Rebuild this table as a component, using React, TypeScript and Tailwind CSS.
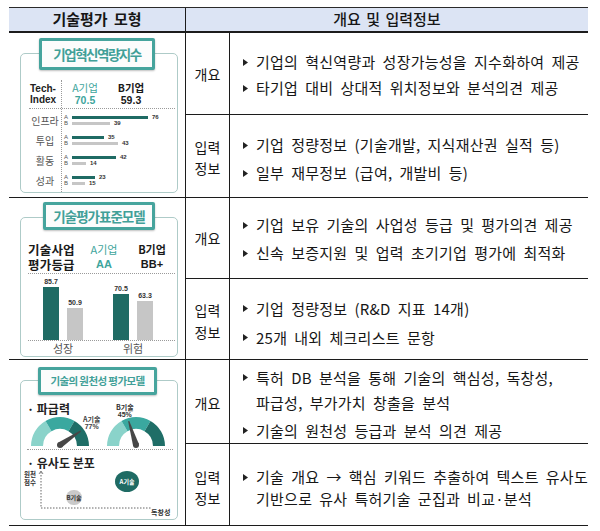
import React from "react";

function Tri() {
  return (
    <svg width="5" height="7" viewBox="0 0 5 7">
      <path d="M0 0L5 3.5L0 7Z" fill="#222" />
    </svg>
  );
}

function Item({
  children,
  lead,
  bh,
  extra = "",
}: {
  children: React.ReactNode;
  lead: string;
  bh: string;
  extra?: string;
}) {
  return (
    <div className={`flex ${extra}`}>
      <div className={`w-[13px] flex-none flex items-center ${bh}`}>
        <Tri />
      </div>
      <div className={`whitespace-nowrap ${lead}`}>{children}</div>
    </div>
  );
}

const rad = (a: number) => (a * Math.PI) / 180;

function arcPath(cx: number, cy: number, r1: number, r2: number, a1: number, a2: number) {
  const p = (r: number, a: number) =>
    `${(cx + r * Math.cos(rad(a))).toFixed(2)} ${(cy - r * Math.sin(rad(a))).toFixed(2)}`;
  return `M${p(r2, a1)} A${r2} ${r2} 0 0 1 ${p(r2, a2)} L${p(r1, a2)} A${r1} ${r1} 0 0 0 ${p(r1, a1)} Z`;
}

function needlePath(cx: number, cy: number, a: number, len: number, w: number) {
  const t = rad(a);
  const tx = cx + len * Math.cos(t);
  const ty = cy - len * Math.sin(t);
  const sx = Math.sin(t);
  const sy = Math.cos(t);
  const f = (n: number) => n.toFixed(2);
  return `M${f(cx + w * sx)} ${f(cy + w * sy)} L${f(tx + 0.6 * sx)} ${f(ty + 0.6 * sy)} L${f(tx - 0.6 * sx)} ${f(ty - 0.6 * sy)} L${f(cx - w * sx)} ${f(cy - w * sy)} Z`;
}

function Gauge({ cx, cy, angle }: { cx: number; cy: number; angle: number }) {
  return (
    <g>
      <path d={arcPath(cx, cy, 17, 29, 180, 120)} fill="#8ad3ca" />
      <path d={arcPath(cx, cy, 17, 29, 120, 60)} fill="#3aa89f" />
      <path d={arcPath(cx, cy, 17, 29, 60, 0)} fill="#1f6e67" />
      <path d={needlePath(cx, cy - 1, angle, 25, 3)} fill="#474747" />
      <circle cx={cx} cy={cy - 1} r={3} fill="#474747" />
    </g>
  );
}

function Title({ children, extra }: { children: React.ReactNode; extra: string }) {
  return (
    <div
      className={`relative z-10 border-[3px] border-[#46a49d] bg-[#fcfcfc] rounded-[2px] flex items-center justify-center font-bold text-[#41a098] shadow-[0_1px_2px_rgba(0,0,0,0.25)] ${extra}`}
    >
      {children}
    </div>
  );
}

function HBar({ letter, w, val, color }: { letter: string; w: string; val: string; color: string }) {
  return (
    <div className="flex items-center h-[6px]">
      <span className="w-[8px] text-[6px] leading-[6px] text-[#555] font-['Liberation_Sans',sans-serif]">{letter}</span>
      <span className={`h-[3px] ${w} ${color}`} />
      <span className="ml-[4px] text-[6px] leading-[6px] font-bold text-[#333] font-['Liberation_Sans',sans-serif]">{val}</span>
    </div>
  );
}

function Card1() {
  const rows = [
    { l: "인프라", a: 76, b: 39, wa: "w-[76px]", wb: "w-[38px]" },
    { l: "투입", a: 35, b: 43, wa: "w-[32px]", wb: "w-[46px]" },
    { l: "활동", a: 42, b: 14, wa: "w-[44px]", wb: "w-[14px]" },
    { l: "성과", a: 23, b: 15, wa: "w-[23px]", wb: "w-[13px]" },
  ];
  return (
    <div className="row-span-2 border-r border-[#1c1c1c] pt-[5px] pl-[11px] flex flex-col">
      <Title extra="ml-[19px] w-[116px] h-[32px] text-[13.5px] tracking-[-1.5px]">기업혁신역량지수</Title>
      <div className="-mt-[17px] w-[158px] h-[140px] border border-[#aecbc8] rounded-[5px] pt-[26px] pl-[8px] pr-[2px]">
        <div className="flex h-[29px] border-b border-dotted border-[#9a9a9a]">
          <div className="w-[33px] border-r border-dotted border-[#9a9a9a] flex flex-col justify-center pl-[1px] font-['Liberation_Sans',sans-serif] font-bold text-[10px] leading-[11px] text-[#222]">
            <span>Tech-</span>
            <span>Index</span>
          </div>
          <div className="flex pl-[9px] gap-[18px] items-center">
            <div className="w-[28px] flex flex-col items-center text-[#3ea59c] text-[10.5px] leading-[12px]">
              <span>A기업</span>
              <span className="font-bold font-['Liberation_Sans',sans-serif]">70.5</span>
            </div>
            <div className="w-[28px] flex flex-col items-center text-[#1a1a1a] font-bold text-[10.5px] leading-[12px]">
              <span>B기업</span>
              <span className="font-['Liberation_Sans',sans-serif]">59.3</span>
            </div>
          </div>
        </div>
        <div className="flex">
          <div className="w-[33px] border-r border-dotted border-[#9a9a9a] flex flex-col pt-[1px] pb-[2px]">
            {rows.map((r) => (
              <div key={r.l} className="h-[20px] flex items-center justify-center text-[10px] text-[#555]">
                {r.l}
              </div>
            ))}
          </div>
          <div className="flex flex-col pl-[2px] pt-[1px]">
            {rows.map((r) => (
              <div key={r.l} className="h-[20px] flex flex-col justify-center">
                <HBar letter="A" w={r.wa} val={String(r.a)} color="bg-[#1f6b64]" />
                <HBar letter="B" w={r.wb} val={String(r.b)} color="bg-[#c6c6c6]" />
              </div>
            ))}
          </div>
        </div>
      </div>
    </div>
  );
}

function VBar({ val, h, color }: { val: string; h: string; color: string }) {
  return (
    <div className="w-[16px] flex flex-col items-center">
      <span className="text-[7px] leading-[8px] mb-[1px] font-bold text-[#333] font-['Liberation_Sans',sans-serif]">{val}</span>
      <div className={`w-[16px] ${h} ${color}`} />
    </div>
  );
}

function Card2() {
  return (
    <div className="row-span-2 border-r border-[#1c1c1c] pt-[4px] pl-[11px] flex flex-col">
      <Title extra="ml-[23px] w-[112px] h-[28px] text-[13.5px] tracking-[-1px]">기술평가표준모델</Title>
      <div className="-mt-[13px] w-[158px] h-[140px] border border-[#aecbc8] rounded-[5px] pt-[24px] pl-[7px] pr-[2px]">
        <div className="flex h-[32px] border-b border-dotted border-[#9a9a9a]">
          <div className="w-[52px] flex flex-col text-[12.5px] font-bold leading-[15px] text-[#1a1a1a] tracking-[0.2px]">
            <span>기술사업</span>
            <span>평가등급</span>
          </div>
          <div className="ml-[9px] w-[30px] flex flex-col items-center text-[#3ea59c] text-[11px] leading-[15px]">
            <span>A기업</span>
            <span className="font-bold font-['Liberation_Sans',sans-serif]">AA</span>
          </div>
          <div className="ml-[18px] w-[30px] flex flex-col items-center text-[#1a1a1a] font-bold text-[11px] leading-[15px]">
            <span>B기업</span>
            <span className="font-['Liberation_Sans',sans-serif]">BB+</span>
          </div>
        </div>
        <div className="flex items-end h-[67px] border-b border-dotted border-[#9a9a9a] pl-[15px]">
          <div className="flex items-end gap-[8px]">
            <VBar val="85.7" h="h-[53px]" color="bg-[#1f6b64]" />
            <VBar val="50.9" h="h-[32px]" color="bg-[#c6c6c6]" />
          </div>
          <div className="flex items-end gap-[8px] ml-[30px]">
            <VBar val="70.5" h="h-[46px]" color="bg-[#1f6b64]" />
            <VBar val="63.3" h="h-[39px]" color="bg-[#c6c6c6]" />
          </div>
        </div>
        <div className="flex pl-[15px] text-[11px] leading-[14px] text-[#555]">
          <div className="w-[40px] text-center">성장</div>
          <div className="w-[40px] ml-[30px] text-center">위험</div>
        </div>
      </div>
    </div>
  );
}

function Card3() {
  return (
    <div className="row-span-2 border-r border-[#1c1c1c] pt-[7px] pl-[11px] flex flex-col">
      <Title extra="ml-[18px] w-[119px] h-[28px] text-[10.5px] tracking-[-0.6px]">기술의 원천성 평가모델</Title>
      <div className="-mt-[15px] w-[158px] h-[140px] border border-[#aecbc8] rounded-[5px] pt-[21px] pl-[6px] pr-[4px]">
        <div className="text-[12px] leading-[14px] font-bold text-[#222]">· 파급력</div>
        <div className="relative h-[34px] border-b border-dotted border-[#9a9a9a]">
          <svg className="absolute left-0 top-0" width="147" height="33" viewBox="0 0 147 33">
            <Gauge cx={33} cy={30} angle={34} />
            <Gauge cx={109} cy={30} angle={107} />
          </svg>
          <div className="absolute left-[56px] top-[0px] flex flex-col items-center text-[7px] leading-[7px] text-[#444] font-bold">
            <span>A기술</span>
            <span className="font-['Liberation_Sans',sans-serif]">77%</span>
          </div>
          <div className="absolute left-[89px] -top-[12px] flex flex-col items-center text-[7px] leading-[7px] text-[#333] font-bold">
            <span>B기술</span>
            <span className="font-['Liberation_Sans',sans-serif]">45%</span>
          </div>
        </div>
        <div className="pt-[6px] text-[12px] leading-[13px] font-bold text-[#222]">· 유사도 분포</div>
        <div className="relative h-[49px]">
          <svg className="absolute left-0 top-0" width="147" height="48" viewBox="0 0 147 48">
            <line x1="14" y1="3" x2="14" y2="39" stroke="#666" strokeWidth="1" strokeDasharray="1.5 1.5" />
            <polyline points="12,5 14,2 16,5" fill="none" stroke="#666" strokeWidth="0.8" />
            <line x1="14" y1="39" x2="125" y2="39" stroke="#666" strokeWidth="1" strokeDasharray="1.5 1.5" />
          </svg>
          <div className="absolute -left-[3px] top-[2px] flex flex-col text-[6.5px] leading-[7.5px] font-bold text-[#333]">
            <span>원천</span>
            <span>점수</span>
          </div>
          <div className="absolute left-[88px] top-[2px] w-[24px] h-[21px] rounded-[50%] bg-[#1f6b64] flex items-center justify-center text-[6px] font-bold text-white">
            A기술
          </div>
          <div className="absolute left-[39px] top-[21px] w-[16px] h-[15px] rounded-full bg-[#cacaca] flex items-center justify-center text-[6px] font-bold text-[#333]">
            B기술
          </div>
          <div className="absolute left-[124px] top-[40px] text-[7px] leading-[7px] font-bold text-[#333]">독창성</div>
        </div>
      </div>
    </div>
  );
}

const B = "border-[#1c1c1c]";

export default function App() {
  return (
    <div className="w-[600px] h-[531px] bg-white pt-[7px] pl-[9px] font-['Noto_Sans_CJK_KR',sans-serif] text-[#161616]">
      <div className="w-[579px] border-t border-[#2a2a2a]">
        <div className="grid grid-cols-[177px_402px] h-[25px] bg-[#dce4f4] border-b-2 border-[#1c1c1c]">
          <div className="border-r border-[#1c1c1c] flex items-center justify-center text-[15px] font-bold [word-spacing:3px]">
            기술평가 모형
          </div>
          <div className="flex items-center justify-center text-[15px] font-medium [word-spacing:2px]">
            개요 및 입력정보
          </div>
        </div>

        {/* Section 1 */}
        <div className={`grid grid-cols-[177px_44px_358px] grid-rows-[82px_82px] border-b ${B}`}>
          <Card1 />
          <div className={`border-r border-b ${B} flex items-center justify-center text-[14px] pt-[1px]`}>개요</div>
          <div className={`border-b ${B} flex flex-col justify-center pl-[13px] pt-[3px] text-[15px] tracking-[0.25px] [word-spacing:3.5px]`}>
            <Item lead="leading-[26px]" bh="h-[26px]">기업의 혁신역량과 성장가능성을 지수화하여 제공</Item>
            <Item lead="leading-[26px]" bh="h-[26px]">타기업 대비 상대적 위치정보와 분석의견 제공</Item>
          </div>
          <div className={`border-r ${B} flex flex-col items-center justify-center text-[14px] leading-[21px] pt-[3px]`}>
            <span>입력</span>
            <span>정보</span>
          </div>
          <div className="flex flex-col justify-center pl-[13px] pt-[6px] text-[15px] tracking-[0.25px] [word-spacing:3.5px]">
            <Item lead="leading-[28px]" bh="h-[28px]">기업 정량정보 (기술개발, 지식재산권 실적 등)</Item>
            <Item lead="leading-[28px]" bh="h-[28px]">일부 재무정보 (급여, 개발비 등)</Item>
          </div>
        </div>

        {/* Section 2 */}
        <div className={`grid grid-cols-[177px_44px_358px] grid-rows-[81px_80px] border-b ${B}`}>
          <Card2 />
          <div className={`border-r border-b ${B} flex items-center justify-center text-[14px]`}>개요</div>
          <div className={`border-b ${B} flex flex-col justify-center pl-[13px] pt-[2px] text-[15px] tracking-[0.25px] [word-spacing:3.5px]`}>
            <Item lead="leading-[28px]" bh="h-[28px]">기업 보유 기술의 사업성 등급 및 평가의견 제공</Item>
            <Item lead="leading-[28px]" bh="h-[28px]">신속 보증지원 및 업력 초기기업 평가에 최적화</Item>
          </div>
          <div className={`border-r ${B} flex flex-col items-center justify-center text-[14px] leading-[22px] pt-[4px]`}>
            <span>입력</span>
            <span>정보</span>
          </div>
          <div className="flex flex-col justify-center pl-[13px] pt-[7px] text-[15px] tracking-[0.25px] [word-spacing:3.5px]">
            <Item lead="leading-[29px]" bh="h-[29px]">기업 정량정보 (R&amp;D 지표 14개)</Item>
            <Item lead="leading-[29px]" bh="h-[29px]">25개 내외 체크리스트 문항</Item>
          </div>
        </div>

        {/* Section 3 */}
        <div className={`grid grid-cols-[177px_44px_358px] grid-rows-[84px_81px] border-b ${B}`}>
          <Card3 />
          <div className={`border-r border-b ${B} flex items-center justify-center text-[14px] pt-[3px]`}>개요</div>
          <div className={`border-b ${B} flex flex-col justify-center pl-[13px] pt-[4px] text-[15px] tracking-[0.25px] [word-spacing:3.5px]`}>
            <Item lead="leading-[25px]" bh="h-[25px]">
              특허 DB 분석을 통해 기술의 핵심성, 독창성,
              <br />
              파급성, 부가가치 창출을 분석
            </Item>
            <Item lead="leading-[25px]" bh="h-[25px]" extra="mt-[3px]">
              기술의 원천성 등급과 분석 의견 제공
            </Item>
          </div>
          <div className={`border-r ${B} flex flex-col items-center justify-center text-[14px] leading-[21px] pt-[7px]`}>
            <span>입력</span>
            <span>정보</span>
          </div>
          <div className="flex flex-col justify-center pl-[13px] pt-[7px] text-[15px] tracking-[0.25px] [word-spacing:3.5px]">
            <Item lead="leading-[22px]" bh="h-[22px]">
              기술 개요 → 핵심 키워드 추출하여 텍스트 유사도
              <br />
              기반으로 유사 특허기술 군집과 비교·분석
            </Item>
          </div>
        </div>
      </div>
    </div>
  );
}
